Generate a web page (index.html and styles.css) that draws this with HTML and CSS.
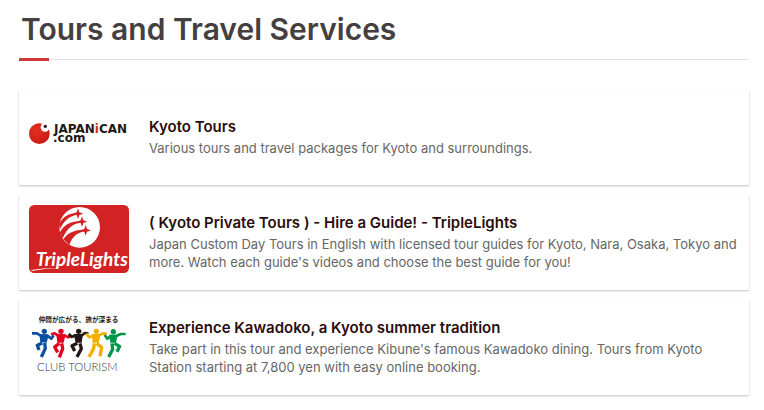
FILE: index.html
```html
<!DOCTYPE html>
<html lang="en">
<head>
    <meta charset="UTF-8">
    <meta name="viewport" content="width=device-width, initial-scale=1.0">
    <title>Tours and Travel Services</title>
    <link rel="stylesheet" href="styles.css">
</head>
<body>

<section class="tours">
    <h2 class="section-title">Tours and Travel Services</h2>

    <!-- Japanican -->
    <article class="card">
        <svg class="logo" viewBox="42 -30 300 204" role="img" aria-label="Japanican.com">
            <defs>
                <radialGradient id="ball" cx="35%" cy="35%" r="70%">
                    <stop offset="0" stop-color="#e0301f"/>
                    <stop offset="1" stop-color="#cc1a18"/>
                </radialGradient>
            </defs>
            <circle cx="73" cy="71" r="31" fill="url(#ball)"/>
            <circle cx="90" cy="52" r="13" fill="#fff"/>
            <circle cx="91" cy="49" r="5" fill="#231815"/>
            <text class="japanican" x="117" y="68">JAPAN<tspan class="letter-i">i</tspan>CAN<tspan x="114" y="97">.com</tspan></text>
        </svg>
        <div class="card-text">
            <h3><a href="#">Kyoto Tours</a></h3>
            <p>Various tours and travel packages for Kyoto and surroundings.</p>
        </div>
    </article>

    <!-- TripleLights -->
    <article class="card">
        <svg class="logo" viewBox="42 45 300 204" role="img" aria-label="TripleLights">
            <rect x="42" y="45" width="300" height="204" rx="16" fill="#d22224"/>
            <circle cx="194" cy="112" r="61" fill="#fff"/>
            <g fill="#d22224">
                <path d="M132 103C144 79 162 69 188 69L188 74C165 77 147 90 135 118Z"/>
                <path d="M134 128C148 103 168 93 198 93L198 98C174 101 157 113 143 145Z"/>
                <path d="M145 148C157 128 180 118 211 119L211 124C187 128 172 139 163 165Z"/>
                <path d="M189 55L193 67L205 71L193 75L189 87L185 75L173 71L185 67Z"/>
                <path d="M201 79L205 91L217 95L205 99L201 111L197 99L185 95L197 91Z"/>
                <path d="M212 105L216 117L228 121L216 125L212 137L208 125L196 121L208 117Z"/>
            </g>
            <text class="triplelights" x="62" y="227">TripleLights</text>
            <path d="M49 240Q90 233 129 234Q90 236 49 243Z" fill="#fff"/>
        </svg>
        <div class="card-text">
            <h3><a href="#">( Kyoto Private Tours ) - Hire a Guide! - TripleLights</a></h3>
            <p>Japan Custom Day Tours in English with licensed tour guides for Kyoto, Nara, Osaka, Tokyo and more. Watch each guide's videos and choose the best guide for you!</p>
        </div>
    </article>

    <!-- Club Tourism -->
    <article class="card">
        <svg class="logo" viewBox="42 30 300 204" role="img" aria-label="Club Tourism">
            <text class="club-tagline" x="71" y="66">仲間が広がる、旅が深まる</text>
            <g class="dancer blue">
                <circle cx="88" cy="94" r="8"/>
                <path class="limb" d="M51 100L66 100L77 107L97 107L109 116L116 106"/>
                <path class="torso" d="M73 103L101 104L95 128L76 127Z"/>
                <path class="leg" d="M82 129L67 136L72 150M89 129L91 145L79 171"/>
            </g>
            <g class="dancer red">
                <circle cx="138" cy="94" r="8"/>
                <path class="limb" d="M108 103L119 100L130 107L148 106L160 112L168 103"/>
                <path class="torso" d="M124 103L152 103L146 128L127 128Z"/>
                <path class="leg" d="M133 130L119 141L128 157M140 130L143 146L133 172"/>
            </g>
            <g class="dancer black">
                <circle cx="191" cy="94" r="8"/>
                <path class="limb" d="M161 102L170 111L182 106L200 106L210 99L220 101"/>
                <path class="torso" d="M176 103L204 103L200 128L182 128Z"/>
                <path class="leg" d="M187 130L171 137L179 153M195 130L199 146L186 171"/>
            </g>
            <g class="dancer yellow">
                <circle cx="244" cy="94" r="8"/>
                <path class="limb" d="M213 101L223 112L235 106L252 106L264 100L275 101"/>
                <path class="torso" d="M230 103L257 103L251 128L233 128Z"/>
                <path class="leg" d="M238 130L236 146L222 171M245 130L260 142L255 169"/>
            </g>
            <g class="dancer green">
                <circle cx="295" cy="95" r="8"/>
                <path class="limb" d="M269 105L277 116L288 108L304 108L317 102L332 102"/>
                <path class="torso" d="M282 104L308 104L303 128L286 128Z"/>
                <path class="leg" d="M291 130L293 148L281 171M298 130L314 139L306 155"/>
            </g>
            <text class="club-name" x="66" y="213">CLUB TOURISM</text>
        </svg>
        <div class="card-text">
            <h3><a href="#">Experience Kawadoko, a Kyoto summer tradition</a></h3>
            <p>Take part in this tour and experience Kibune's famous Kawadoko dining. Tours from Kyoto Station starting at 7,800 yen with easy online booking.</p>
        </div>
    </article>
</section>

</body>
</html>
```

FILE: styles.css
```css
body {
    margin: 0;
    background-color: #fff;
    font-family: Inter, "Liberation Sans", sans-serif;
}
.tours {
    padding: 0 15px 10px 19px;
}
.section-title {
    position: relative;
    margin: 0 0 30px;
    padding: 10px 2px;
    border-bottom: 1px solid #e2e2e2;
    color: #453f3f;
    font-size: 30px;
    font-weight: 600;
    line-height: 39px;
}
/* short red bar over the left end of the rule */
.section-title::after {
    content: "";
    position: absolute;
    left: 0;
    bottom: -2px;
    width: 30px;
    height: 3px;
    background-color: #d23a3a;
}
.card {
    display: flex;
    align-items: center;
    gap: 20px;
    min-height: 75px;
    margin-bottom: 10px;
    padding: 10px;
    background-color: #fff;
    box-shadow: 0 1px 2px rgba(0, 0, 0, 0.25);
}
.logo {
    flex: none;
    align-self: flex-start;
    width: 100px;
    height: 68px;
}
.card-text {
    padding-bottom: 3px;
}
.card h3 {
    margin: 0;
    font-size: 15px;
    font-weight: 600;
    line-height: 24px;
}
.card h3 a {
    color: #2b0d0d;
    text-decoration: none;
}
.card p {
    margin: 0;
    color: #666;
    font-size: 13px;
    line-height: 18px;
}

/* logos */
.japanican {
    fill: #231815;
    font-family: "DejaVu Sans", sans-serif;
    font-size: 36px;
    font-weight: 700;
}
.letter-i {
    fill: #d7261e;
}
.triplelights {
    fill: #fff;
    font-family: Lato, sans-serif;
    font-size: 57px;
    font-style: italic;
    font-weight: 700;
}
.club-tagline {
    fill: #231815;
    font-family: "Noto Sans CJK JP", sans-serif;
    font-size: 20px;
    font-weight: 700;
}
.club-name {
    fill: #333;
    font-family: Lato, sans-serif;
    font-size: 34px;
    font-weight: 300;
}
.dancer {
    fill: currentColor;
    stroke: currentColor;
    stroke-linejoin: round;
}
.dancer circle,
.torso {
    stroke: none;
}
.limb,
.leg {
    fill: none;
    stroke-width: 8;
}
.leg {
    stroke-width: 10;
}
.blue {
    color: #0b50a0;
}
.red {
    color: #e50020;
}
.black {
    color: #231815;
}
.yellow {
    color: #f5af00;
}
.green {
    color: #00964a;
}
```
